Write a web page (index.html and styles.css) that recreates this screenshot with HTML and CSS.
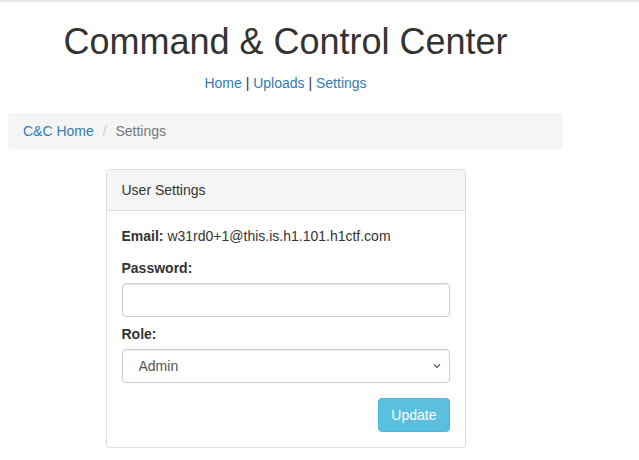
FILE: index.html
```html
<!DOCTYPE html>
<html lang="en">
<head>
<meta charset="utf-8">
<title>Command &amp; Control Center</title>
<link rel="stylesheet" href="styles.css">
</head>
<body>
<div class="topline"></div>
<div class="page">
  <h1 class="title">Command &amp; Control Center</h1>
  <p class="nav"><a href="#">Home</a> | <a href="#">Uploads</a> | <a href="#">Settings</a></p>
  <ol class="breadcrumb">
    <li><a href="#">C&amp;C Home</a></li>
    <li class="active">Settings</li>
  </ol>
  <div class="panel">
    <div class="panel-heading">User Settings</div>
    <form class="panel-body">
      <p class="email"><strong>Email:</strong> w31rd0+1@this.is.h1.101.h1ctf.com</p>
      <label class="label" for="pw">Password:</label>
      <input class="control" id="pw" type="password">
      <label class="label label-role" for="role">Role:</label>
      <select class="control select" id="role">
        <option>Admin</option>
        <option>User</option>
      </select>
      <div class="actions">
        <button type="button" class="btn">Update</button>
      </div>
    </form>
  </div>
</div>
</body>
</html>
```

FILE: styles.css
```css
* { box-sizing: border-box; }
html, body { margin: 0; padding: 0; background: #fff; }
body {
  font-family: "Liberation Sans", Arial, Helvetica, sans-serif;
  font-size: 14px;
  line-height: 20px;
  color: #333;
}
a { color: #337ab7; text-decoration: none; }

.topline { height: 2px; background: #dfe8e5; }

.page {
  width: 555px;
  margin-left: 8px;
}

.title {
  margin: 20px 0 0;
  font-size: 36px;
  font-weight: 500;
  line-height: 39.6px;
  text-align: center;
  color: #333;
}

.nav {
  margin: 11px 0 0;
  text-align: center;
}

.breadcrumb {
  list-style: none;
  margin: 20px 0 20px;
  padding: 8px 15px;
  background: #f5f5f5;
  border-radius: 4px;
}
.breadcrumb li { display: inline-block; }
.breadcrumb li.active { color: #777; }
.breadcrumb li + li::before {
  content: "/\00a0";
  padding: 0 5px;
  color: #ccc;
}

.panel {
  width: 360px;
  margin: 0 auto;
  border: 1px solid #ddd;
  border-radius: 4px;
  background: #fff;
  box-shadow: 0 1px 1px rgba(0,0,0,.05);
}
.panel-heading {
  padding: 10px 15px;
  background: #f5f5f5;
  border-bottom: 1px solid #ddd;
  border-radius: 3px 3px 0 0;
}
.panel-body {
  padding: 15px;
  display: flex;
  flex-direction: column;
}
.email { margin: 0 0 12px; }
.label {
  display: block;
  font-weight: bold;
  margin-bottom: 5px;
}
.label-role { margin-top: 7px; }

.control {
  display: block;
  width: 100%;
  height: 34px;
  padding: 6px 12px;
  font-family: inherit;
  font-size: 14px;
  line-height: 20px;
  color: #555;
  background-color: #fff;
  border: 1px solid #ccc;
  border-radius: 4px;
  box-shadow: inset 0 1px 1px rgba(0,0,0,.075);
}
.select {
  -webkit-appearance: none;
  appearance: none;
  padding-left: 16px;
  padding-right: 28px;
  background-image: url("data:image/svg+xml,%3Csvg xmlns='http://www.w3.org/2000/svg' width='8' height='6' viewBox='0 0 8 6'%3E%3Cpath d='M1 1.5 L4 4.5 L7 1.5' fill='none' stroke='%23555' stroke-width='1.2'/%3E%3C/svg%3E");
  background-repeat: no-repeat;
  background-position: right 8px center;
  background-size: 8px 6px;
}

.actions {
  display: flex;
  justify-content: flex-end;
  margin-top: 15px;
}
.btn {
  font-family: inherit;
  font-size: 14px;
  line-height: 20px;
  padding: 6px 12px;
  color: #fff;
  background: #5bc0de;
  border: 1px solid #46b8da;
  border-radius: 4px;
  cursor: pointer;
}
```
